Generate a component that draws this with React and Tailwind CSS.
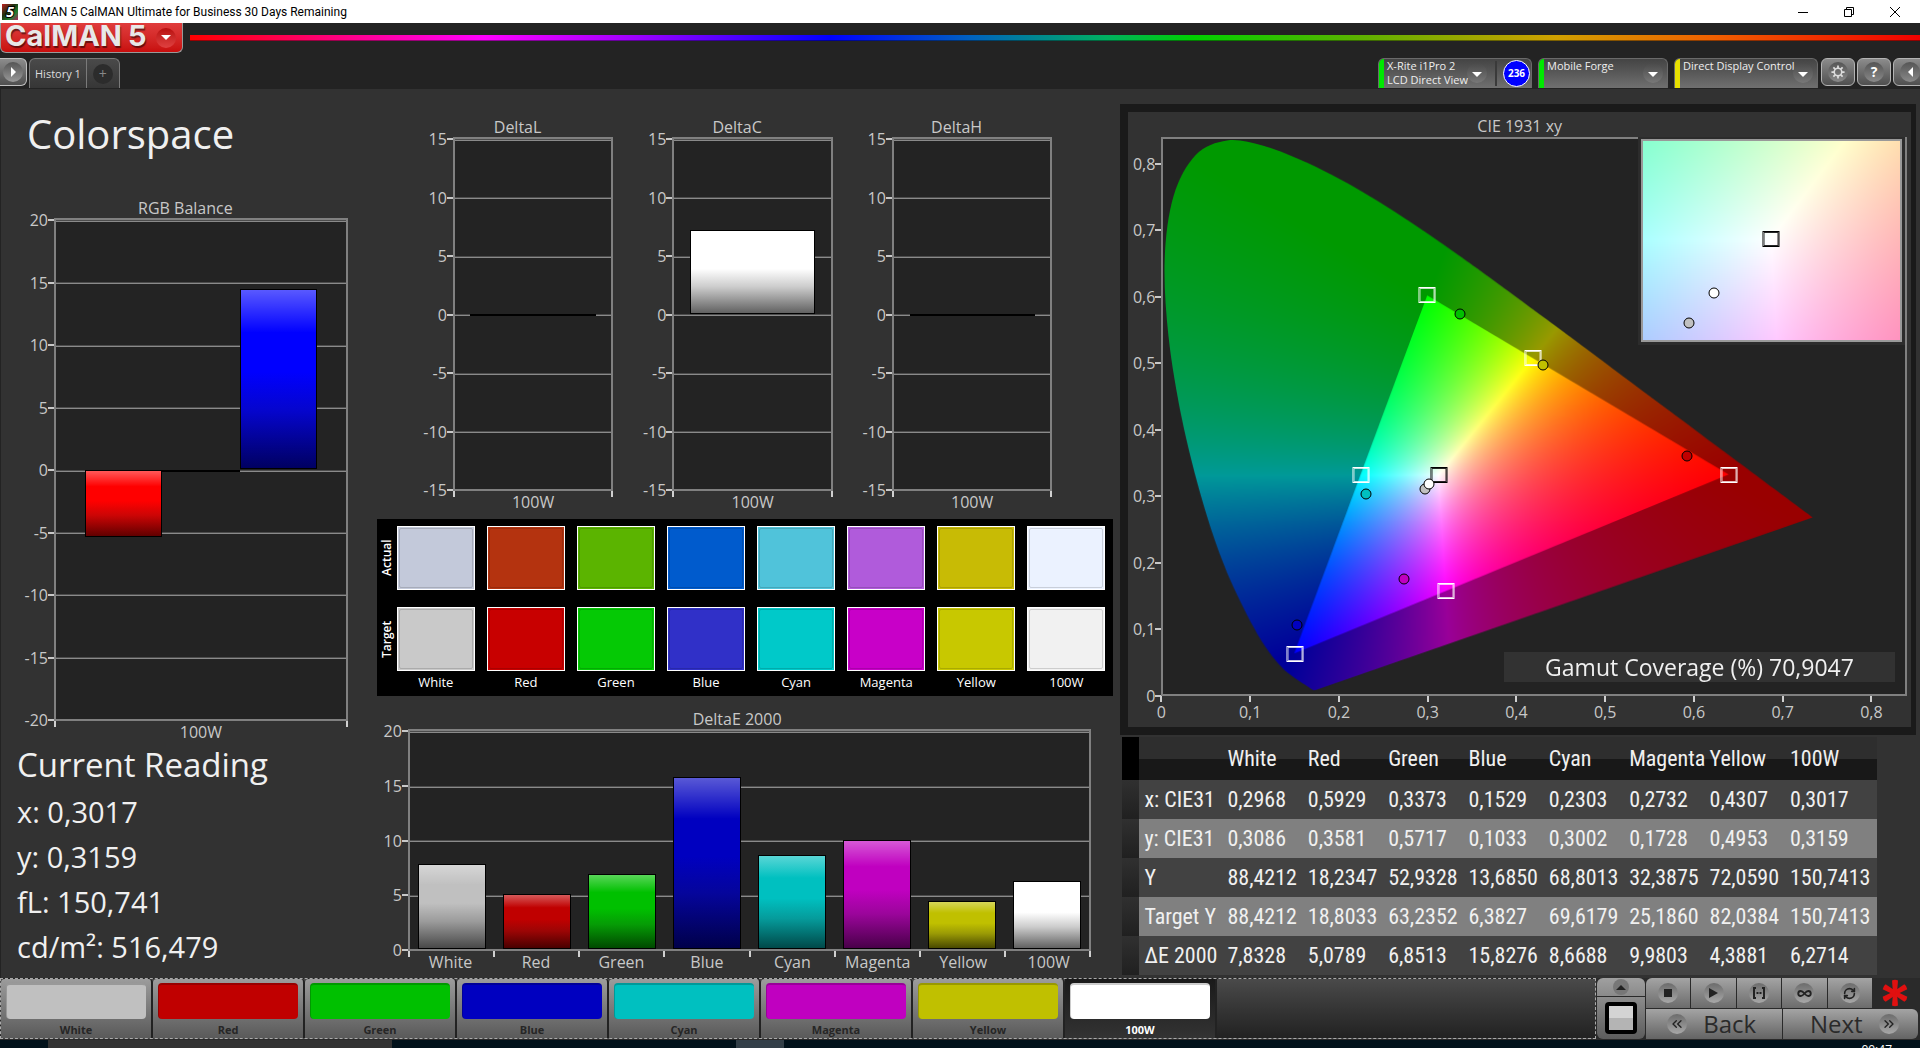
import React, { useEffect, useRef } from 'react'
import { ChevronsLeft, ChevronsRight, Infinity as InfinityIcon, RefreshCw } from 'lucide-react'

const PATCHES = [
  { name: 'White', color: '#c0c0c0', actual: '#c3c9da', target: '#c9c9c9', x: '0,2968', y: '0,3086', Y: '88,4212', targetY: '88,4212', dE: '7,8328' },
  { name: 'Red', color: '#c00000', actual: '#b4330f', target: '#c80000', x: '0,5929', y: '0,3581', Y: '18,2347', targetY: '18,8033', dE: '5,0789' },
  { name: 'Green', color: '#00c000', actual: '#5bb400', target: '#05c905', x: '0,3373', y: '0,5717', Y: '52,9328', targetY: '63,2352', dE: '6,8513' },
  { name: 'Blue', color: '#0000c0', actual: '#005bcd', target: '#3030c8', x: '0,1529', y: '0,1033', Y: '13,6850', targetY: '6,3827', dE: '15,8276' },
  { name: 'Cyan', color: '#00c0c0', actual: '#50c3da', target: '#00c9c9', x: '0,2303', y: '0,3002', Y: '68,8013', targetY: '69,6179', dE: '8,6688' },
  { name: 'Magenta', color: '#c000c0', actual: '#b05bdb', target: '#c800c8', x: '0,2732', y: '0,1728', Y: '32,3875', targetY: '25,1860', dE: '9,9803' },
  { name: 'Yellow', color: '#c0c000', actual: '#c8bb05', target: '#c8c800', x: '0,4307', y: '0,4953', Y: '72,0590', targetY: '82,0384', dE: '4,3881' },
  { name: '100W', color: '#ffffff', actual: '#ebf2ff', target: '#f1f1f1', x: '0,3017', y: '0,3159', Y: '150,7413', targetY: '150,7413', dE: '6,2714' },
]

const ROWS = [
  { label: 'x: CIE31', key: 'x' },
  { label: 'y: CIE31', key: 'y' },
  { label: 'Y', key: 'Y' },
  { label: 'Target Y', key: 'targetY' },
  { label: 'ΔE 2000', key: 'dE' },
]

const num = (s) => Number(s.replace(',', '.'))

// spectral locus, CIE 1931 2 degree observer
const LOCUS = [
  [0.1741, 0.005], [0.1726, 0.0048], [0.1714, 0.0051], [0.1689, 0.0069], [0.1644, 0.0109], [0.1566, 0.0177],
  [0.144, 0.0297], [0.1355, 0.0399], [0.1241, 0.0578], [0.1096, 0.0868], [0.0913, 0.1327], [0.0687, 0.2007],
  [0.0454, 0.295], [0.0235, 0.4127], [0.0082, 0.5384], [0.0039, 0.6548], [0.0139, 0.7502], [0.0389, 0.812],
  [0.0743, 0.8338], [0.1142, 0.8262], [0.1547, 0.8059], [0.1929, 0.7816], [0.2296, 0.7543], [0.2658, 0.7243],
  [0.3016, 0.6923], [0.3373, 0.6589], [0.3731, 0.6245], [0.4441, 0.5547], [0.5125, 0.4866], [0.5752, 0.4242],
  [0.627, 0.3725], [0.6658, 0.334], [0.6915, 0.3083], [0.719, 0.2809], [0.7347, 0.2653],
]

const GAMUT = [[0.64, 0.33], [0.3, 0.6], [0.15, 0.06]]
const TARGETS = [
  [0.64, 0.33], [0.3, 0.6], [0.15, 0.06], [0.2246, 0.3287], [0.3209, 0.1542], [0.4193, 0.5053],
]
const WHITE = [0.3127, 0.329]

const FULL = { x0: 0.002, x1: 0.839, y0: -0.001, y1: 0.836 }
const INSET = { x0: 0.2878, x1: 0.3378, y0: 0.3044, y1: 0.3528 }

function chromaColor(x, y) {
  const X = x / y
  const Z = (1 - x - y) / y
  const rgb = [
    3.2406 * X - 1.5372 - 0.4986 * Z,
    -0.9689 * X + 1.8758 + 0.0415 * Z,
    0.0557 * X - 0.204 + 1.057 * Z,
  ].map((c) => Math.max(0, c))
  const top = Math.max(...rgb)
  return rgb.map((c) => (c / top) * 255)
}

const ChromaCanvas = ({ view, width, height, locus }) => {
  const ref = useRef(null)

  useEffect(() => {
    const ctx = ref.current.getContext('2d')
    const img = ctx.createImageData(width, height)
    for (let j = 0; j < height; j++) {
      const y = view.y1 - ((j + 0.5) / height) * (view.y1 - view.y0)
      for (let i = 0; i < width; i++) {
        const x = view.x0 + ((i + 0.5) / width) * (view.x1 - view.x0)
        const [r, g, b] = chromaColor(x, y)
        img.data.set([r, g, b, 255], (j * width + i) * 4)
      }
    }
    ctx.globalCompositeOperation = 'source-over'
    ctx.putImageData(img, 0, 0)
    if (!locus) return

    const px = ([x, y]) => [
      ((x - view.x0) / (view.x1 - view.x0)) * width,
      ((view.y1 - y) / (view.y1 - view.y0)) * height,
    ]

    // dim everything outside the gamut triangle
    ctx.beginPath()
    ctx.rect(0, 0, width, height)
    GAMUT.map(px).forEach(([x, y], i) => (i ? ctx.lineTo(x, y) : ctx.moveTo(x, y)))
    ctx.closePath()
    ctx.fillStyle = 'rgba(0, 0, 0, 0.4)'
    ctx.fill('evenodd')

    // keep only what lies inside the locus
    const pts = LOCUS.map(px)
    ctx.beginPath()
    ctx.moveTo(...pts[0])
    for (let i = 0; i < pts.length - 1; i++) {
      const p0 = pts[Math.max(0, i - 1)]
      const p1 = pts[i]
      const p2 = pts[i + 1]
      const p3 = pts[Math.min(pts.length - 1, i + 2)]
      ctx.bezierCurveTo(
        p1[0] + (p2[0] - p0[0]) / 6, p1[1] + (p2[1] - p0[1]) / 6,
        p2[0] - (p3[0] - p1[0]) / 6, p2[1] - (p3[1] - p1[1]) / 6,
        p2[0], p2[1],
      )
    }
    ctx.closePath()
    ctx.globalCompositeOperation = 'destination-in'
    ctx.fillStyle = '#000'
    ctx.fill()
  }, [view, width, height, locus])

  return <canvas ref={ref} width={width} height={height} className="absolute inset-0 h-full w-full" />
}

const place = (view, [x, y]) => ({
  left: `${((x - view.x0) / (view.x1 - view.x0)) * 100}%`,
  top: `${((view.y1 - y) / (view.y1 - view.y0)) * 100}%`,
})

const Square = ({ view, at, dark }) => (
  <span
    className={`absolute h-4 w-[17px] -translate-x-1/2 -translate-y-1/2 border ${
      dark ? 'border-black shadow-[inset_0_0_0_1px_rgba(0,0,0,0.85)]' : 'border-white shadow-[inset_0_0_0_1px_rgba(255,255,255,0.75)]'
    }`}
    style={place(view, at)}
  />
)

const Dot = ({ view, patch }) => (
  <span
    className="absolute h-[11px] w-[11px] -translate-x-1/2 -translate-y-1/2 rounded-full border border-black"
    style={{ ...place(view, [num(patch.x), num(patch.y)]), backgroundColor: patch.color }}
  />
)

const Gloss = () => (
  <span className="absolute inset-0 bg-[linear-gradient(to_bottom,rgba(255,255,255,0.35)_0%,rgba(255,255,255,0)_24%,rgba(0,0,0,0)_46%,rgba(24,24,24,0.22)_68%,rgba(0,0,0,0.62)_100%)]" />
)

const BarChart = ({ title, min, max, groups, className, axisClass }) => {
  const ticks = []
  for (let v = max; v >= min; v -= 5) ticks.push(v)
  const pct = (v) => `${(v / (max - min)) * 100}%`

  return (
    <section className={`flex min-h-0 flex-col text-base text-[#c8c8c8] ${className}`}>
      <h3 className="h-5 text-center leading-5">{title}</h3>
      <div className="flex min-h-0 flex-1 pr-[14px]">
        <div className={`flex flex-col justify-between pt-0.5 pb-[21px] ${axisClass}`}>
          {ticks.map((v) => (
            <div key={v} className="flex h-0 items-center justify-end">
              <span>{v}</span>
              <span className="h-0.5 w-1.5 bg-[#c8c8c8]" />
            </div>
          ))}
        </div>
        <div className="flex min-w-0 flex-1 flex-col">
          <div className="relative flex flex-1 border-2 border-[#808080] bg-[#232323]">
            {ticks.slice(0, -1).map((v) => (
              <span
                key={v}
                className="absolute inset-x-0 h-0.5 border-t border-b border-t-[#4c4c4c] border-b-[#8a8a8a]"
                style={{ top: pct(max - v) }}
              />
            ))}
            {groups.map((g) => (
              <div key={g.label} className="flex flex-1 justify-center">
                <div className="relative flex w-4/5">
                  {g.bars.map((b, i) => (
                    <div key={i} className="relative flex-1">
                      <div
                        className="absolute inset-x-0 min-h-0.5 overflow-hidden border border-black"
                        style={{
                          top: pct(max - Math.max(b.value, 0)),
                          height: pct(Math.abs(b.value)),
                          backgroundColor: b.color,
                        }}
                      >
                        <Gloss />
                      </div>
                    </div>
                  ))}
                </div>
              </div>
            ))}
          </div>
          <div className="relative flex h-5 leading-[22px]">
            <div className="absolute inset-x-0 top-0 flex justify-between">
              {[...groups, null].map((_, i) => (
                <span key={i} className="h-1.5 w-0.5 bg-[#d0d0d0]" />
              ))}
            </div>
            {groups.map((g) => (
              <span key={g.label} className="flex-1 text-center">{g.label}</span>
            ))}
          </div>
        </div>
      </div>
    </section>
  )
}

const ArrowDown = () => (
  <span className="flex h-5 w-5 items-center justify-center rounded-full bg-linear-to-b from-[#4a4a4a] to-[#787878]">
    <svg viewBox="0 0 10 5" className="mt-0.5 h-[5px] w-2.5"><path d="M0 0h10L5 5z" fill="#fff" /></svg>
  </span>
)

const DeviceMenu = ({ lines, stripe, children, className }) => (
  <div className={`flex h-[30px] shrink-0 overflow-hidden rounded-t-md border border-b-0 border-[#6a6a6a] bg-linear-to-b from-[#444] to-[#707070] ${className}`}>
    <span className={`w-[5px] shrink-0 ${stripe}`} />
    <button type="button" className="flex min-w-0 flex-1 items-start justify-between pr-1 pl-[3px] text-left text-[11px] leading-[14px] whitespace-nowrap text-[#eee]">
      <span className="min-w-0">
        {lines.map((l) => <span key={l} className="block">{l}</span>)}
      </span>
      <span className="mt-1"><ArrowDown /></span>
    </button>
    {children}
  </div>
)

const SquareButton = ({ label, children, className = '' }) => (
  <button
    type="button"
    aria-label={label}
    className={`flex h-7 w-[34px] shrink-0 items-center justify-center rounded-md border border-[#b4b4b4] bg-linear-to-b from-[#8c8c8c] to-[#505050] ${className}`}
  >
    <span className="flex h-5 w-5 items-center justify-center rounded-full bg-linear-to-b from-[#555] to-[#8a8a8a] text-sm font-bold text-white">
      {children}
    </span>
  </button>
)

const Header = () => (
  <header className="bg-[#232323]">
    <div className="flex h-[23px] items-center bg-white pr-0.5 pl-0.5 text-xs text-black">
      <svg viewBox="0 0 16 16" className="mr-[5px] h-4 w-4">
        <defs>
          <linearGradient id="appIcon" x1="0" y1="0" x2="1" y2="1">
            <stop offset="0" stopColor="#c02020" />
            <stop offset="0.4" stopColor="#203010" />
            <stop offset="0.7" stopColor="#208030" />
            <stop offset="1" stopColor="#b02060" />
          </linearGradient>
        </defs>
        <rect width="16" height="16" fill="url(#appIcon)" />
        <text x="8" y="13" textAnchor="middle" fontSize="14" fontWeight="bold" fontStyle="italic" fill="#fff" stroke="#000" strokeWidth="2" paintOrder="stroke">5</text>
      </svg>
      <span className="flex-1 font-[Roboto,sans-serif]">CalMAN 5 CalMAN Ultimate for Business 30 Days Remaining</span>
      <div className="flex items-center">
        <button type="button" aria-label="Minimize" className="flex w-[46px] justify-center">
          <svg viewBox="0 0 10 10" className="h-2.5 w-2.5" fill="none" stroke="#000"><path d="M0 5.5h10" /></svg>
        </button>
        <button type="button" aria-label="Restore" className="flex w-[46px] justify-center">
          <svg viewBox="0 0 10 10" className="h-2.5 w-2.5" fill="none" stroke="#000"><path d="M.5 2.5h7v7h-7zM2.500 2.500v-2h7v7h-2" /></svg>
        </button>
        <button type="button" aria-label="Close" className="flex w-[46px] justify-center">
          <svg viewBox="0 0 10 10" className="h-2.5 w-2.5" fill="none" stroke="#000"><path d="M0 0l10 10M10 0L0 10" /></svg>
        </button>
      </div>
    </div>

    <div className="flex h-[35px] items-start">
      <button
        type="button"
        className="flex h-[30px] w-[183px] items-center rounded-b-md border border-t-0 border-[#999] bg-linear-to-b from-[#e03c3c] to-[#c80c0c] pl-1 font-[Inter,sans-serif] text-[29px] leading-none font-bold text-[#e8e8e8]"
      >
        <span className="flex flex-1 gap-1.5 pb-1 [text-shadow:1px_2px_1px_rgba(0,0,0,0.5)]">
          <span>CalMAN</span>
          <span>5</span>
        </span>
        <span className="mr-1.5 flex h-5 w-5 items-center justify-center rounded-full bg-linear-to-b from-[#b80c0c] to-[#e04040]">
          <svg viewBox="0 0 10 5" className="h-[5px] w-2.5"><path d="M0 0h10L5 5z" fill="#fff" /></svg>
        </span>
      </button>
      <div className="mt-3 ml-[7px] h-1.5 flex-1 border-b border-black/40 bg-[linear-gradient(to_right,#f00_0%,#f0f_17%,#90f_26%,#00f_37%,#0060c0_45%,#00b060_53%,#00d000_58%,#60b000_68%,#d0a000_79%,#f06000_88%,#f00000_100%)]" />
    </div>

    <div className="flex h-[31px] items-start">
      <button type="button" aria-label="Open panel" className="flex h-7 w-[27px] items-center justify-center rounded-r-md border border-l-0 border-[#c0c0c0] bg-linear-to-b from-[#8c8c8c] to-[#505050]">
        <span className="flex h-5 w-5 items-center justify-center rounded-full bg-linear-to-b from-[#555] to-[#9a9a9a]">
          <svg viewBox="0 0 5 10" className="h-2.5 w-[5px]"><path d="M0 0v10l5-5z" fill="#fff" /></svg>
        </span>
      </button>
      <nav className="ml-0.5 flex h-[30px] rounded-t-md border border-b-0 border-[#7a7a7a] bg-linear-to-b from-[#4a4a4a] to-[#363636] text-[11px] text-[#ddd]">
        <button type="button" className="px-[5px] pt-0.5">History 1</button>
        <button type="button" aria-label="Add tab" className="flex items-center border-l border-[#7a7a7a] px-1.5">
          <span className="flex h-5 w-5 items-center justify-center rounded-full bg-[#2c2c2c] text-sm text-[#888]">+</span>
        </button>
      </nav>
      <div className="ml-auto flex overflow-hidden">
        <DeviceMenu lines={['X-Rite i1Pro 2', 'LCD Direct View']} stripe="bg-[#00e800]" className="mr-1.5 w-[154px]">
          <span className="my-0.5 ml-1 w-0.5 shrink-0 bg-[#3a3a3a]" />
          <span className="mt-px mr-px ml-1.5 flex h-[27px] w-[27px] shrink-0 items-center justify-center rounded-full border border-white bg-[#0000ff] text-[10px] font-bold text-white">236</span>
        </DeviceMenu>
        <DeviceMenu lines={['Mobile Forge']} stripe="bg-[#00e800]" className="mr-1.5 w-[130px]" />
        <DeviceMenu lines={['Direct Display Control']} stripe="bg-[#e8e000]" className="mr-[3px] w-[144px]" />
        <SquareButton label="Settings" className="mr-0.5">
          <svg viewBox="0 0 16 16" className="h-3.5 w-3.5" fill="none" stroke="#ddd">
            <circle cx="8" cy="8" r="4.300" strokeWidth="1.800" />
            <path d="M8 0.500v3M8 12.500v3M.5 8h3M12.500 8h3M2.700 2.700l2.100 2.100M11.200 11.200l2.100 2.100M2.700 13.300l2.100-2.100M11.200 4.800l2.100-2.100" strokeWidth="2" />
          </svg>
        </SquareButton>
        <SquareButton label="Help" className="mr-0.5">?</SquareButton>
        <SquareButton label="Collapse" className="-mr-[7px]">
          <svg viewBox="0 0 5 10" className="h-2.5 w-[5px]"><path d="M5 0v10L0 5z" fill="#fff" /></svg>
        </SquareButton>
      </div>
    </div>
  </header>
)

const Swatches = () => (
  <section className="mt-2 mr-[3px] ml-[7px] flex bg-black pt-[7px] pb-1 text-[13px] text-white">
    <div className="flex w-5 flex-col gap-[17px] text-xs font-semibold">
      <span className="flex h-16 rotate-180 items-center justify-center leading-5 [writing-mode:vertical-rl]">Actual</span>
      <span className="flex h-16 rotate-180 items-center justify-center leading-5 [writing-mode:vertical-rl]">Target</span>
    </div>
    <div className="grid flex-1 grid-cols-8 gap-x-3 pr-2">
      {PATCHES.map((p) => (
        <div key={p.name} className="text-center">
          <div className="h-16 border border-white p-px" style={{ backgroundColor: p.actual }}>
            <div className="h-full rounded-xs border border-black/15" />
          </div>
          <div className="mt-[17px] h-16 border border-white p-px" style={{ backgroundColor: p.target }}>
            <div className="h-full rounded-xs border border-black/15" />
          </div>
          <div className="h-[21px] leading-[22px]">{p.name}</div>
        </div>
      ))}
    </div>
  </section>
)

const CieChart = () => {
  const ticks = ['0', '0,1', '0,2', '0,3', '0,4', '0,5', '0,6', '0,7', '0,8']
  const rest = `${(0.04 / 0.84) * 100}%`

  return (
    <section className="flex flex-1 flex-col border-8 border-r-[5px] border-[#1a1a1a] pr-1 pb-1 text-base text-[#c8c8c8]">
      <h3 className="h-[25px] pt-0.5 pl-1 text-center leading-6">CIE 1931 xy</h3>
      <div className="flex flex-1">
        <div className="flex w-[33px] flex-col pb-[27px]">
          <div style={{ height: rest }} />
          <div className="flex flex-1 flex-col-reverse justify-between">
            {ticks.map((t) => (
              <div key={t} className="flex h-0 items-center justify-end">
                <span>{t}</span>
                <span className="h-0.5 w-1.5 bg-[#c8c8c8]" />
              </div>
            ))}
          </div>
        </div>
        <div className="flex flex-1 flex-col">
          <div className="relative flex-1 border-2 border-[#808080] bg-[#232323]">
            <ChromaCanvas view={FULL} width={745} height={558} locus />
            {TARGETS.map((t) => <Square key={t.join()} view={FULL} at={t} />)}
            <Square view={FULL} at={WHITE} dark />
            {PATCHES.map((p) => <Dot key={p.name} view={FULL} patch={p} />)}
            <div className="absolute -top-0.5 right-0 h-[208px] w-[267px] border-[3px] border-t-2 border-[#2c2c2c]">
              <div className="relative h-full w-full border-2 border-[#999]">
                <ChromaCanvas view={INSET} width={257} height={199} />
                <Square view={INSET} at={WHITE} dark />
                <Dot view={INSET} patch={PATCHES[0]} />
                <Dot view={INSET} patch={PATCHES[7]} />
              </div>
            </div>
            <div className="absolute right-2.5 bottom-3 h-[30px] w-[391px] bg-[#323232] text-center text-[23px] leading-[30px] text-[#f0f0f0]">
              Gamut Coverage (%) 70,9047
            </div>
          </div>
          <div className="flex h-[27px]">
            <div className="flex flex-1 justify-between">
              {ticks.map((t) => (
                <div key={t} className="flex w-0 flex-col items-center">
                  <span className="h-1.5 w-0.5 bg-[#d0d0d0]" />
                  <span className="leading-5">{t}</span>
                </div>
              ))}
            </div>
            <div style={{ width: rest }} />
          </div>
        </div>
      </div>
    </section>
  )
}

const ReadingsTable = () => (
  <div className="mt-0.5 mr-[39px] ml-0.5">
    <table className="w-full table-fixed border-collapse font-[Roboto_Condensed,Open_Sans_Condensed,sans-serif] text-[22px] leading-8 whitespace-nowrap text-[#f0f0f0]">
      <thead>
        <tr className="h-[43px] bg-[linear-gradient(to_bottom,#2e2e2e_50%,#181818_50%)]">
          <th className="w-[17px] bg-black" />
          <th className="w-[83px]" />
          {PATCHES.map((p) => (
            <th key={p.name} scope="col" className="p-0 pl-[5px] text-left font-normal last:w-[92px]">{p.name}</th>
          ))}
        </tr>
      </thead>
      <tbody>
        {ROWS.map((r) => (
          <tr key={r.key} className="h-[39px] bg-[#424242] even:bg-[#808080]">
            <td className="bg-linear-to-b from-[#303030] to-[#202020]" />
            <th scope="row" className="p-0 pl-[5px] text-left font-normal">{r.label}</th>
            {PATCHES.map((p) => (
              <td key={p.name} className="p-0 pl-[5px]">{p[r.key]}</td>
            ))}
          </tr>
        ))}
      </tbody>
    </table>
  </div>
)

const Round = ({ children }) => (
  <span className="flex h-5 w-5 items-center justify-center rounded-full bg-linear-to-b from-[#6c6c6c] to-[#a8a8a8] text-[#222]">
    {children}
  </span>
)

const TRANSPORT = [
  { label: 'Stop', icon: <span className="h-2 w-2 bg-[#222]" /> },
  { label: 'Read', icon: <svg viewBox="0 0 9 10" className="h-2.5 w-[9px]"><path d="M0 0v10l9-5z" fill="#222" /></svg> },
  {
    label: 'Read series',
    icon: (
      <svg viewBox="0 0 14 12" className="h-3 w-3.5" fill="none" stroke="#222" strokeWidth="2">
        <path d="M4 1H2v10h2M10 1h2v10h-2" />
        <path d="M4.500 6h2M7.500 6h2" />
      </svg>
    ),
  },
  { label: 'Read continuously', icon: <InfinityIcon size={15} strokeWidth={3} /> },
  { label: 'Refresh', icon: <RefreshCw size={13} strokeWidth={3} /> },
]

const BottomBar = () => (
  <footer className="flex h-[62px] bg-[#2a2a2a] pr-0.5 pb-px">
    <div className="flex flex-1 border border-dashed border-[#aaa] bg-linear-to-b from-[#4a4a4a] to-[#222]">
      {PATCHES.map((p, i) => {
        const selected = i === PATCHES.length - 1
        return (
          <button
            key={p.name}
            type="button"
            className={`flex w-[152px] flex-col items-center border-r-2 border-[#222] px-[5px] pt-1 text-[11px] font-bold ${
              selected ? 'bg-linear-to-b from-[#1a1a1a] to-[#333] text-white' : 'rounded-t bg-linear-to-b from-[#9c9c9c] to-[#5a5a5a] text-[#262626]'
            }`}
          >
            <span className="h-9 w-full rounded-[4px] border-t-2 border-l border-black/20" style={{ backgroundColor: p.color }} />
            <span className="mt-[3px] leading-4">{p.name}</span>
          </button>
        )
      })}
    </div>
    <div className="ml-px flex w-12 flex-col gap-px">
      <button type="button" aria-label="Expand" className="flex h-[18px] items-center justify-center rounded-t-md bg-linear-to-b from-[#a0a0a0] to-[#8a8a8a]">
        <span className="flex h-4 w-4 items-center justify-center rounded-full bg-[#777]">
          <svg viewBox="0 0 10 5" className="h-[5px] w-2.5"><path d="M0 5h10L5 0z" fill="#222" /></svg>
        </span>
      </button>
      <button type="button" aria-label="Pattern window" className="flex flex-1 items-center justify-center rounded-b-md bg-linear-to-b from-[#8c8c8c] to-[#5c5c5c]">
        <span className="h-8 w-8 rounded border-4 border-black bg-[linear-gradient(to_bottom,#d4d4d4_50%,#b4b4b4_50%)]" />
      </button>
    </div>
    <div className="ml-px flex w-[272px] flex-col gap-px">
      <div className="flex h-[30px]">
        <div className="grid w-[226px] grid-cols-5 gap-px">
          {TRANSPORT.map((t) => (
            <button key={t.label} type="button" aria-label={t.label} className="flex items-center justify-center bg-linear-to-b from-[#a4a4a4] to-[#6c6c6c] first:rounded-tl-md">
              <Round>{t.icon}</Round>
            </button>
          ))}
        </div>
        <div className="flex flex-1 items-center justify-center">
          <svg viewBox="-14 -14 28 28" className="h-7 w-7" fill="#e01010">
            {[0, 60, 120, 180, 240, 300].map((a) => (
              <path key={a} transform={`rotate(${a})`} d="M-2 0L-3 -12.500Q0 -14 3 -12.500L2 0z" />
            ))}
          </svg>
        </div>
      </div>
      <div className="grid flex-1 grid-cols-2 gap-px text-2xl leading-none font-medium text-[#2a2a2a]">
        <button type="button" className="flex items-center justify-center gap-4 bg-linear-to-b from-[#a4a4a4] to-[#646464] pr-1">
          <Round><ChevronsLeft size={16} /></Round>
          Back
        </button>
        <button type="button" className="flex items-center justify-center gap-4 rounded-r-md bg-linear-to-b from-[#a4a4a4] to-[#646464] pl-2">
          Next
          <Round><ChevronsRight size={16} /></Round>
        </button>
      </div>
    </div>
  </footer>
)

const DELTAS = [
  { title: 'DeltaL', value: 0 },
  { title: 'DeltaC', value: 7.25 },
  { title: 'DeltaH', value: 0 },
]

const App = () => (
  <div className="flex min-h-screen flex-col overflow-hidden bg-[#323232] font-[Open_Sans,Noto_Sans,sans-serif]">
    <Header />

    <main className="grid flex-1 grid-cols-[369fr_747fr_804fr] border-l border-[#232323]">
      <div className="flex flex-col text-[#f0f0f0]">
        <h1 className="pt-[18px] pl-[26px] text-[40px] leading-[54px]">Colorspace</h1>
        <BarChart
          title="RGB Balance"
          min={-20}
          max={20}
          axisClass="w-[45px]"
          className="mt-[37px] mr-2 ml-2 flex-1"
          groups={[{
            label: '100W',
            bars: [
              { color: '#ff0000', value: -5.45 },
              { color: '#00ff00', value: 0 },
              { color: '#0000ff', value: 14.45 },
            ],
          }]}
        />
        <div className="pb-[9px] pl-4 text-[29px] leading-[45px]">
          <h2 className="text-[33px] leading-[48px]">Current Reading</h2>
          <p>x: 0,3017</p>
          <p>y: 0,3159</p>
          <p>fL: 150,741</p>
          <p>cd/m²: 516,479</p>
        </div>
      </div>

      <div className="flex flex-col pt-7 pb-[7px]">
        <div className="flex flex-[395] pr-[50px] pl-[38px]">
          {DELTAS.map((d) => (
            <BarChart
              key={d.title}
              title={d.title}
              min={-15}
              max={15}
              axisClass="w-[45px]"
              className="flex-1"
              groups={[{ label: '100W', bars: [{ color: '#ffffff', value: d.value }] }]}
            />
          ))}
        </div>
        <Swatches />
        <BarChart
          title="DeltaE 2000"
          min={0}
          max={20}
          axisClass="w-[39px]"
          className="mt-[13px] mr-[11px] -ml-px flex-[262]"
          groups={PATCHES.map((p) => ({ label: p.name, bars: [{ color: p.color, value: num(p.dE) }] }))}
        />
      </div>

      <div className="flex flex-col pt-[15px] pr-1 pb-[3px] pl-1">
        <CieChart />
        <ReadingsTable />
      </div>
    </main>

    <BottomBar />

    <div className="flex h-2 justify-between overflow-hidden bg-[linear-gradient(to_right,#02121b_48px,#333_48px,#333_392px,#02121b_392px,#02121b_736px,#333f48_736px,#333f48_784px,#02121b_784px)]">
      <span />
      <span className="mt-1 mr-7 text-xs leading-none text-white">00:47</span>
    </div>
  </div>
)

export default App
